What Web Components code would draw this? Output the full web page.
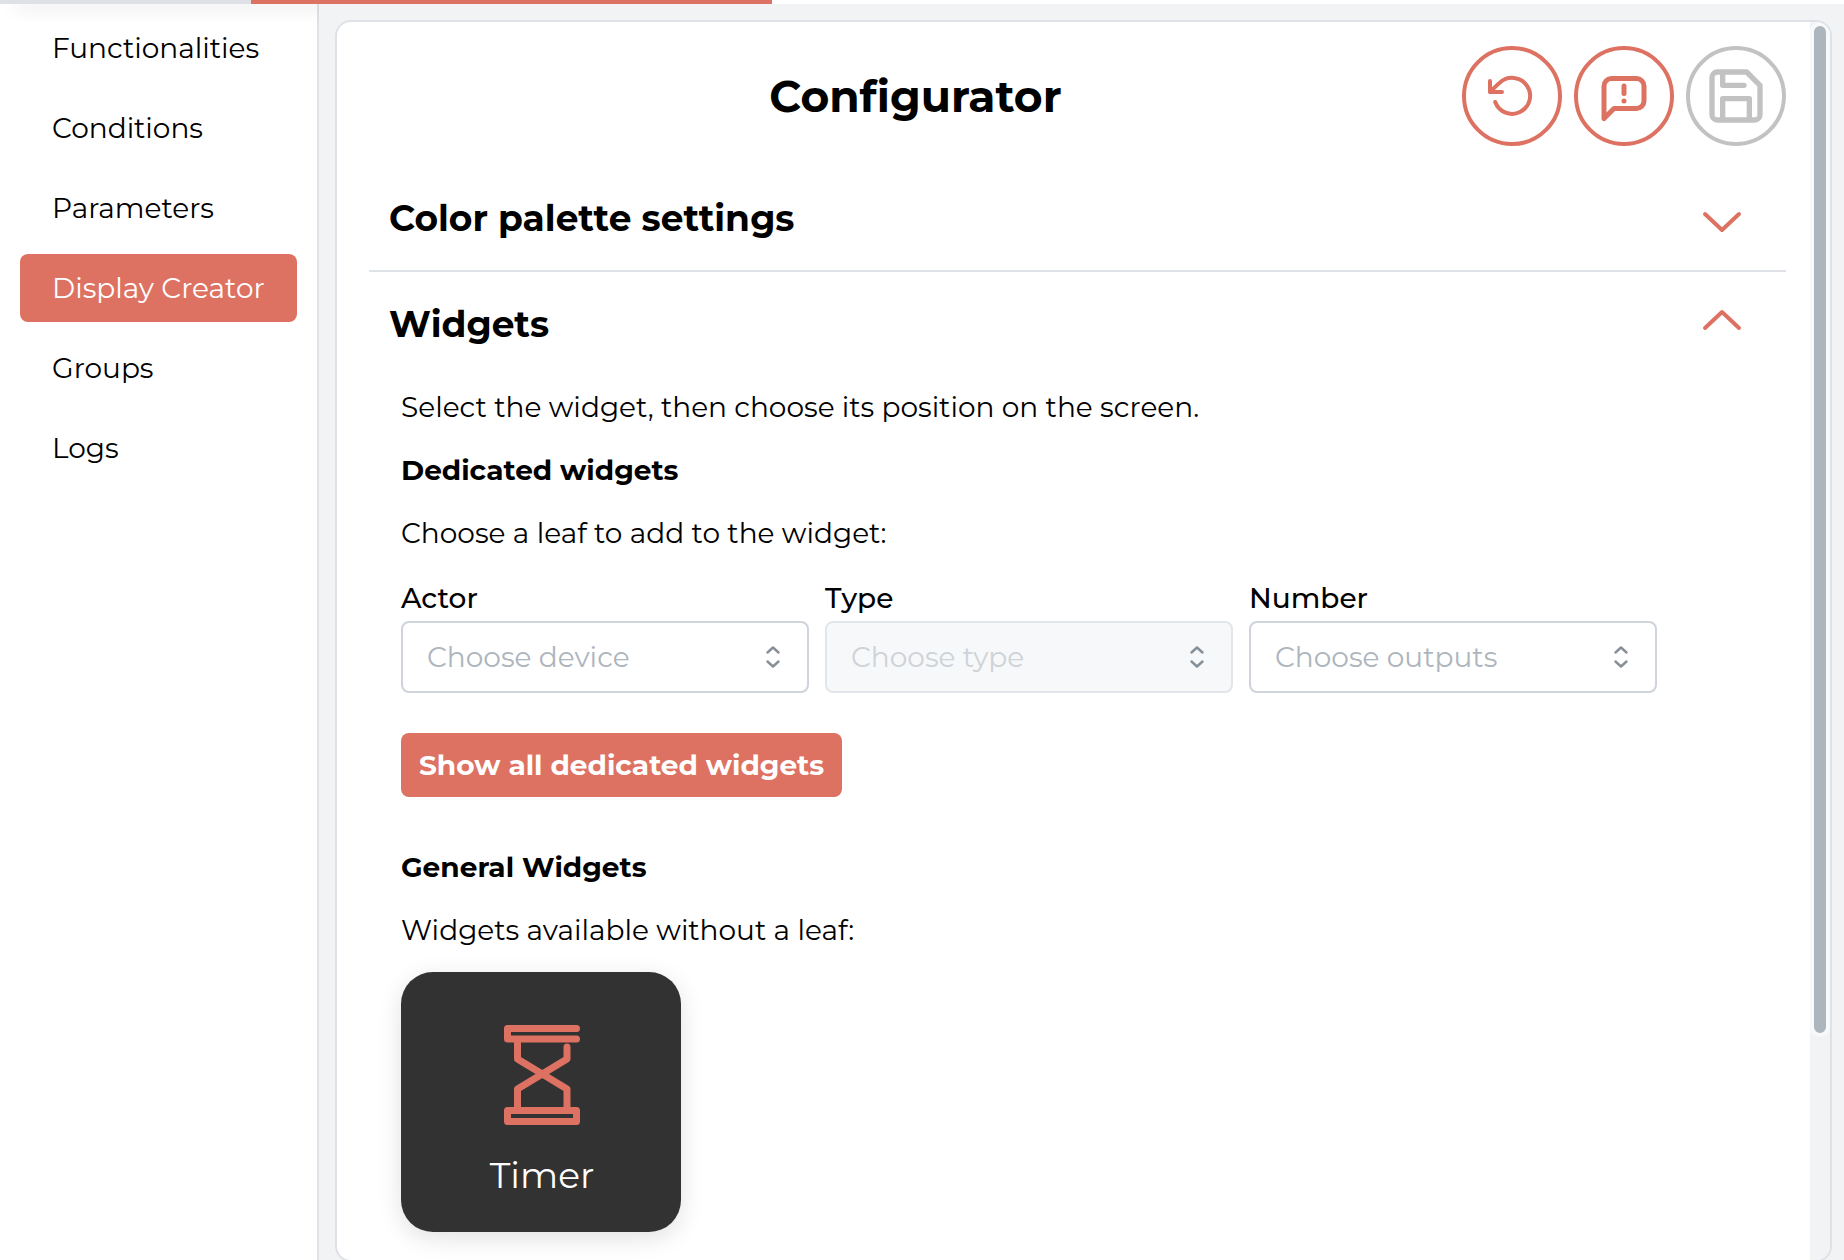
<!DOCTYPE html>
<html lang="en">
<head>
<meta charset="utf-8">
<title>Configurator</title>
<style>
  :root {
    --accent: #dd7262;
    --line: #dee2e6;
    --ground: #f1f3f5;
  }
  body {
    margin: 0;
    background: var(--ground);
    color: #000;
    font-family: Montserrat, Inter, sans-serif;
    font-size: 28px;
  }
</style>
</head>
<body>
<config-app></config-app>

<script>
const define = (name, html, setup) => {
  const template = document.createElement('template');
  template.innerHTML = '<style>*{box-sizing:border-box}svg{display:block}</style>' + html;
  customElements.define(name, class extends HTMLElement {
    constructor() {
      super();
      this.attachShadow({ mode: 'open' }).append(template.content.cloneNode(true));
    }
    connectedCallback() {
      if (setup) setup(this, this.shadowRoot);
    }
  });
};

define('top-tabs', `
  <style>
    :host { display: flex; height: 4px; background: #fff; position: relative; box-shadow: 14px 4px 16px 0 rgb(0 0 0 / 16%); }
    .idle { flex: 0 0 251px; background: var(--line); }
    .active { flex: 0 0 521px; background: var(--accent); }
  </style>
  <div class="idle"></div><div class="active"></div>
`);

define('nav-item', `
  <style>
    :host { display: block; }
    a { display: flex; align-items: center; height: 68px; padding: 0 32px; border-radius: 8px; color: inherit; text-decoration: none; white-space: nowrap; }
    :host([active]) a { background: var(--accent); color: #fff; }
  </style>
  <a href="#"><slot></slot></a>
`, (el, root) => {
  if (el.hasAttribute('active')) root.querySelector('a').setAttribute('aria-current', 'page');
});

define('side-nav', `
  <style>
    :host { display: block; background: #fff; border-right: 2px solid var(--line); padding: 10px 20px; }
    nav { display: flex; flex-direction: column; gap: 12px; }
  </style>
  <nav><slot></slot></nav>
`);

define('round-button', `
  <style>
    :host { display: block; color: var(--accent); }
    :host([disabled]) { color: #c2c2c2; }
    button { display: grid; place-items: center; width: 100px; height: 100px; padding: 0; border: 4px solid; border-radius: 50%; background: none; color: inherit; }
  </style>
  <button type="button"><slot></slot></button>
`, (el, root) => {
  const button = root.querySelector('button');
  button.setAttribute('aria-label', el.getAttribute('label'));
  button.disabled = el.hasAttribute('disabled');
});

define('accordion-section', `
  <style>
    :host { display: block; border-bottom: 2px solid var(--line); }
    :host([open]) { border-bottom: 0; }
    h2 { margin: 0; font: inherit; }
    button { display: flex; align-items: center; justify-content: space-between; width: 100%; height: 104px; padding: 0 40px 0 20px; border: 0; background: none; color: inherit; font: 700 36px/48px Montserrat, Inter, sans-serif; text-align: left; }
    svg { color: var(--accent); }
    :host([open]) svg { transform: rotate(180deg); }
    .panel { display: none; padding: 10px 32px; }
    :host([open]) .panel { display: block; }
  </style>
  <h2><button type="button"><slot name="title"></slot>
    <svg width="48" height="48" viewBox="-24 -24 48 48" fill="none" stroke="currentColor" stroke-width="4" stroke-linecap="round" stroke-linejoin="round"><path d="M-17-4 0 12 17-4"/></svg>
  </button></h2>
  <div class="panel"><slot></slot></div>
`, (el, root) => {
  root.querySelector('button').setAttribute('aria-expanded', el.hasAttribute('open'));
});

define('select-field', `
  <style>
    :host { display: block; flex: 1 1 0; min-width: 0; }
    label { display: block; line-height: 46px; font-weight: 500; }
    .box { display: grid; align-items: center; }
    select { grid-area: 1 / 1; appearance: none; width: 100%; height: 72px; margin: 0; padding: 0 24px; border: 2px solid #ced4da; border-radius: 8px; background: #fff; color: #adb5bd; font: inherit; opacity: 1; }
    select:disabled { border-color: #e2e5e9; background: #f7f8fa; color: #ced3d7; }
    svg { grid-area: 1 / 1; justify-self: end; margin-right: 24px; color: #868e96; pointer-events: none; }
  </style>
  <label for="field"></label>
  <div class="box">
    <select id="field"><option></option></select>
    <svg width="24" height="30" viewBox="-12 -15 24 30" fill="none" stroke="currentColor" stroke-width="2.400" stroke-linecap="round" stroke-linejoin="round"><path d="M-5.500-4.500 0-9.500 5.500-4.500M-5.500 4.500 0 9.500 5.500 4.500"/></svg>
  </div>
`, (el, root) => {
  root.querySelector('label').textContent = el.getAttribute('label');
  root.querySelector('option').textContent = el.getAttribute('placeholder');
  root.querySelector('select').disabled = el.hasAttribute('disabled');
});

define('widget-tile', `
  <style>
    :host { display: block; }
    button { display: flex; flex-direction: column; align-items: center; justify-content: center; gap: 26px; width: 280px; height: 260px; padding: 20px 0 0 2px; border: 0; border-radius: 32px; background: #323232; box-shadow: 0 6px 24px rgb(0 0 0 / 12%); color: #fff; font: 400 36px/48px Montserrat, Inter, sans-serif; }
    svg { color: var(--accent); }
  </style>
  <button type="button">
    <svg width="76" height="100" viewBox="0 0 76 100" fill="none" stroke="currentColor" stroke-width="7" stroke-linecap="round" stroke-linejoin="round"><path d="M72.500 3.500H3.500V14H72.500M13.500 14V34L63 64V84M63 22V34L13.500 64V84M3.500 85.500H72.500V96.500H3.500Z"/></svg>
    <slot></slot>
  </button>
`);

define('scroll-track', `
  <style>
    :host { display: block; background: var(--ground); }
    div { height: 82%; border: 4px solid #f8f9fa; border-radius: 10px; background: #adb5bd; }
  </style>
  <div></div>
`);

define('config-panel', `
  <style>
    :host { display: flex; background: #fff; border: 2px solid var(--line); border-radius: 16px; overflow: hidden; }
    .body { flex: 1; min-width: 0; padding: 24px 24px 0 32px; }
    header { display: flex; align-items: center; gap: 12px; margin-bottom: 20px; }
    h1 { flex: 1; margin: 0; font-size: 44px; line-height: 56px; text-align: center; margin-right: -12px; }
    scroll-track { flex: 0 0 20px; }
    .stack { display: flex; flex-direction: column; align-items: flex-start; gap: 20px; }
    p, h3 { margin: 0; line-height: 43px; }
    h3 { font-size: inherit; font-weight: 700; }
    .fields { display: flex; gap: 16px; width: 100%; max-width: 1256px; }
    .show { height: 64px; margin: 20px 0 29px; padding: 0 18px; border: 0; border-radius: 8px; background: var(--accent); color: #fff; font: inherit; font-weight: 700; white-space: nowrap; }
  </style>
  <div class="body">
    <header>
      <h1>Configurator</h1>
      <round-button label="Reset">
        <svg width="60" height="60" viewBox="-30 -30 60 60" fill="none" stroke="currentColor" stroke-width="4" stroke-linecap="round" stroke-linejoin="round"><path d="M-16.800 6A18 18 0 1 0-12-13.500Q-15-11-22-4M-22-15V-4H-10"/></svg>
      </round-button>
      <round-button label="Report">
        <svg width="60" height="60" viewBox="0 0 24 24" fill="none" stroke="currentColor" stroke-width="2" stroke-linecap="round" stroke-linejoin="round"><path d="M4 21V8a3 3 0 0 1 3-3h10a3 3 0 0 1 3 3v6a3 3 0 0 1-3 3H8l-4 4M12 8v3M12 14v.01"/></svg>
      </round-button>
      <round-button label="Save" disabled>
        <svg width="64" height="64" viewBox="0 0 24 24" fill="none" stroke="currentColor" stroke-width="2" stroke-linecap="round" stroke-linejoin="round"><path d="M19 21H5a2 2 0 0 1-2-2V5a2 2 0 0 1 2-2h11l5 5v11a2 2 0 0 1-2 2zM17 21v-8H7v8M7 3v5h8"/></svg>
      </round-button>
    </header>
    <accordion-section><span slot="title">Color palette settings</span></accordion-section>
    <accordion-section open>
      <span slot="title">Widgets</span>
      <div class="stack">
        <p>Select the widget, then choose its position on the screen.</p>
        <h3>Dedicated widgets</h3>
        <p>Choose a leaf to add to the widget:</p>
        <div class="fields">
          <select-field label="Actor" placeholder="Choose device"></select-field>
          <select-field label="Type" placeholder="Choose type" disabled></select-field>
          <select-field label="Number" placeholder="Choose outputs"></select-field>
        </div>
        <button class="show" type="button">Show all dedicated widgets</button>
        <h3>General Widgets</h3>
        <p>Widgets available without a leaf:</p>
        <widget-tile>Timer</widget-tile>
      </div>
    </accordion-section>
  </div>
  <scroll-track></scroll-track>
`);

define('config-app', `
  <style>
    :host { display: grid; grid-template: 4px 1fr / 319px 1fr; min-height: 100vh; overflow: hidden; }
    top-tabs { grid-column: 1 / -1; }
    main { display: flex; position: relative; min-width: 0; margin-bottom: -2px; padding: 16px 12px 0 16px; background: var(--ground); }
    config-panel { flex: 1; min-width: 0; }
  </style>
  <top-tabs></top-tabs>
  <side-nav>
    <nav-item>Functionalities</nav-item>
    <nav-item>Conditions</nav-item>
    <nav-item>Parameters</nav-item>
    <nav-item active>Display Creator</nav-item>
    <nav-item>Groups</nav-item>
    <nav-item>Logs</nav-item>
  </side-nav>
  <main><config-panel></config-panel></main>
`);
</script>
</body>
</html>
